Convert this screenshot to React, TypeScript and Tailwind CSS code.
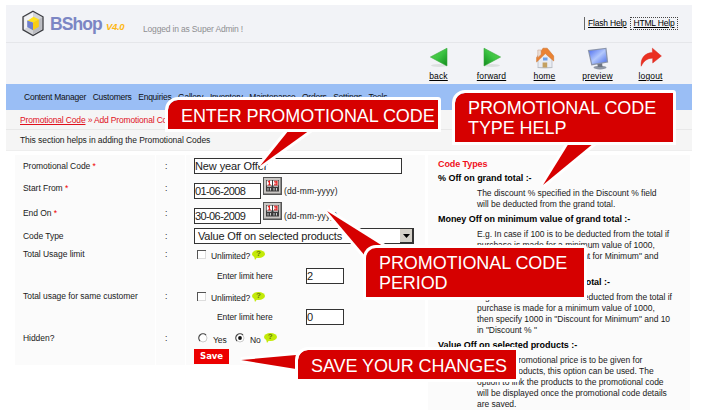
import type { ReactNode } from "react";

const menu = [
  "Content Manager",
  "Customers",
  "Enquiries",
  "Gallery",
  "Inventory",
  "Maintenance",
  "Orders",
  "Settings",
  "Tools",
];

function Logo() {
  return (
    <svg width="24" height="27" viewBox="0 0 24 27">
      <path d="M12 1.3 22 6.8v13L12 25.6 2 19.8v-13Z" fill="#d3d4d8" stroke="#3c3d42" strokeWidth="1.3" />
      <path d="M12 2.6 3.2 7.4v11.8L12 14Z" fill="#f3f3f5" />
      <path d="M12 24.2 20.8 19.2V7.6L12 14Z" fill="#b9bac0" />
      <path d="m12.500 6.800 5.300 2.400-5.300 3.200-6.300-1.400Z" fill="#ffe21c" />
      <path d="M6.2 10.500 12 12.600v7.600L6.2 17Z" fill="#6f7fcb" />
      <path d="M17.8 9.200 12 12.600v7.600l5.8-3.400Z" fill="#f9cd12" />
    </svg>
  );
}

function Arrow({ flip = false }: { flip?: boolean }) {
  return (
    <svg width="20" height="22" viewBox="0 0 20 22" className={flip ? "-scale-x-100" : ""}>
      <defs>
        <linearGradient id="green" x1="0" y1="0" x2="1" y2="1">
          <stop offset="0" stopColor="#63d04e" />
          <stop offset="0.5" stopColor="#3cc443" />
          <stop offset="1" stopColor="#118a1d" />
        </linearGradient>
      </defs>
      <ellipse cx="10" cy="18.500" rx="8" ry="1.5" fill="#dcdfe0" />
      <path d="M1.4 10 18 1.2v17.8Z" fill="url(#green)" stroke="#35a83a" strokeWidth="0.6" />
    </svg>
  );
}

function Home() {
  return (
    <svg width="20" height="22" viewBox="0 0 20 22">
      <ellipse cx="10" cy="20.5" rx="8" ry="1.2" fill="#d5d8dc" />
      <path d="M3 10 10 4.500l7 5.500v10.5H3Z" fill="#e9ecf2" stroke="#a7acb6" strokeWidth="0.6" />
      <path d="M8 1.200h4.200L18.700 9v5L10.300 6.600 1.600 15V10.500Z" fill="#ea8234" stroke="#c96a20" strokeWidth="0.5" />
      <path d="M2.800 3h3.200v4.500l-3.200 3Z" fill="#eadfd8" stroke="#c99a80" strokeWidth="0.5" />
      <path d="M8 10.500h4.500v3H8Z" fill="#6e9fe8" />
      <path d="M7.6 15.500h4.6v5H7.6Z" fill="#c3a061" />
    </svg>
  );
}

function Monitor() {
  return (
    <svg width="22" height="23" viewBox="0 0 22 23">
      <defs>
        <linearGradient id="screen" x1="0" y1="0" x2="1" y2="1">
          <stop offset="0" stopColor="#4d6df0" />
          <stop offset="0.5" stopColor="#b3c8fc" />
          <stop offset="1" stopColor="#4b6de8" />
        </linearGradient>
      </defs>
      <ellipse cx="13" cy="20.6" rx="6.5" ry="1.8" fill="#8e95a3" />
      <path d="m10 16 5-1 .5 5H11Z" fill="#6d7583" />
      <path d="M.8 3 19.5.8l1.7 14.6L4.3 18.6Z" fill="#8b95ab" />
      <path d="M2.2 4 18.4 2l1.4 12.4L5.2 17Z" fill="url(#screen)" />
    </svg>
  );
}

function Logout() {
  return (
    <svg width="22" height="22" viewBox="0 0 22 22">
      <path
        d="M1.2 19.2C.3 11 5.2 5.8 12.4 5.6V1.2L21.4 9l-8.7 7V11.2C7.6 11 3.8 13.8 1.2 19.2Z"
        fill="#ea3022"
        stroke="#d92a20"
        strokeWidth="0.5"
      />
    </svg>
  );
}

function Tool({ label, children }: { label: string; children: ReactNode }) {
  return (
    <div className="flex w-[53px] flex-col items-center">
      <div className="flex h-[23px] items-start">{children}</div>
      <a className="text-[8.5px] leading-[12px] tracking-[0.15px] text-black underline">{label}</a>
    </div>
  );
}

function Row({ label, required, h, pt, children }: { label?: string; required?: boolean; h: string; pt?: string; children: ReactNode }) {
  return (
    <div className={`flex gap-px ${h}`}>
      <div className={`w-[140px] bg-[#fbfbfb] pl-[8px] leading-[10px] tracking-[-0.05px] ${pt ?? ""}`}>
        {label}
        {required && <span className="text-[#f00000]"> *</span>}
      </div>
      <div className={`w-[29px] bg-[#fbfbfb] pl-[9px] leading-[10px] ${pt ?? ""}`}>{label && ":"}</div>
      <div className="flex w-[239px] bg-[#fbfbfb] pl-[8px]">{children}</div>
    </div>
  );
}

function Box({ className, children }: { className: string; children: ReactNode }) {
  return (
    <div className={`h-[16px] shrink-0 border border-[#333] bg-white text-[11px] leading-[15px] text-[#222] ${className}`}>
      {children}
    </div>
  );
}

function Calendar() {
  return (
    <svg width="19" height="18" viewBox="0 0 19 18" className="ml-[2px] shrink-0">
      <path d="M0 0h19v18H0Z" fill="#555" />
      <path d="M1 1h16.5v15.5H1Z" fill="#c9c6c3" />
      <path d="M3 3h13v11.5H3Z" fill="#3c3c3c" />
      <path d="M3.7 3.5h5.3v5H3.7ZM10 3.5h5.3v5H10Z" fill="#fff" />
      <path d="m5 5 1.4-1v4M4.8 8h3.2M11 4.2h3v1.7h-2.5M14 5.9v2h-3" fill="none" stroke="#e01818" strokeWidth="1.1" />
      <path d="M4 9.3h4.5M10.5 9.3H15M5 11v2.5M7.5 11v2.5M11 11v2.5M13.5 11v2.5" stroke="#ddd" strokeWidth="0.9" />
    </svg>
  );
}

function Hint() {
  return (
    <span className="relative flex h-[8px] w-[13px] items-center justify-center rounded-[50%] bg-[#c3ea08] text-[8px] leading-[8px] font-bold text-[#637c10]">
      ?
      <svg width="4" height="4" className="absolute -bottom-[2px] left-[2px]">
        <path d="M0 0h4L1 4Z" fill="#c3ea08" />
      </svg>
    </span>
  );
}

function Check() {
  return <span className="h-[9px] w-[9px] border-t border-l border-[#555] bg-white shadow-[inset_-1px_-1px_0_#ddd]" />;
}

function Radio({ on = false }: { on?: boolean }) {
  return (
    <svg width="10" height="10" viewBox="0 0 10 10">
      <circle cx="5" cy="5" r="4" fill="#fff" stroke="#ccc" />
      <path d="M2 8A4 4 0 0 1 8 2" fill="none" stroke="#444" strokeWidth="1.1" />
      {on && <circle cx="5" cy="5" r="1.9" fill="#111" />}
    </svg>
  );
}

function LimitRows({ label, value, h }: { label: string; value: string; h: string }) {
  return (
    <>
      <Row label={label} h={h} pt="pt-[3px]">
        <div className="flex h-[10px] pt-[4px] pl-[3px]">
          <Check />
          <span className="mt-px ml-[5px] w-[41px] leading-[10px]">Unlimited?</span>
          <Hint />
        </div>
      </Row>
      <Row h="h-[22px]">
        <span className="w-[112px] shrink-0 pt-[5px] pl-[23px] leading-[10px] whitespace-nowrap">Enter limit here</span>
        <Box className="mt-[2px] w-[38px]">{value}</Box>
      </Row>
    </>
  );
}

function HelpItem({ title, lines, className }: { title: string; lines: string[]; className: string }) {
  return (
    <div className={className}>
      <h3 className="mb-[4px] bg-[#fbfbfb] pl-[10px] text-[9px] leading-[11px] font-bold tracking-[-0.04px] text-black">{title}</h3>
      {lines.map((l) => (
        <p key={l} className="pl-[49px] leading-[11px] tracking-[-0.03px] whitespace-nowrap">
          {l}
        </p>
      ))}
    </div>
  );
}

function Callout({ className, children }: { className: string; children: ReactNode }) {
  return (
    <div
      className={`absolute rounded-tl-[13px] rounded-tr-[3px] border-[3px] border-white bg-[#d60000] bg-clip-padding pl-[13px] text-[18px] leading-[20px] tracking-[-0.08px] whitespace-nowrap text-white ${className}`}
    >
      {children}
    </div>
  );
}

export default function App() {
  return (
    <div className="relative h-[419px] w-[702px] overflow-hidden bg-white pt-[5px] pl-[6px] font-['Liberation_Sans',Arial,sans-serif] text-[8.5px] tracking-[-0.1px] text-[#1a1a1a]">
      <div className="w-[686px]">
        <header className="flex h-[38px] items-start border-b border-[#e5e6ea] bg-[#f2f3f7] pl-[15px]">
          <div className="mt-[5px]">
            <Logo />
          </div>
          <span className="mt-[9px] ml-[5px] w-[56px] text-[17.5px] leading-[20px] font-bold tracking-[-0.9px] text-[#7c86c4]">BShop</span>
          <span className="mt-[16px] w-[37px] text-[9.5px] leading-[12px] font-bold tracking-[-0.3px] text-[#fdb814] italic">V4.0</span>
          <span className="mt-[18px] tracking-[-0.17px] text-[#8e8e92]">Logged in as Super Admin !</span>
          <div className="mt-[12px] mr-[14px] ml-auto flex h-[13px] items-center border-l border-[#666] pl-[3px] leading-[11px] tracking-[-0.2px] text-black">
            <a className="w-[42px] underline">Flash Help</a>
            <a className="h-[13px] w-[48px] border border-dotted border-[#444] text-center underline">HTML Help</a>
          </div>
        </header>
        <div className="flex h-[41px] justify-end bg-[#f2f3f7] pt-[4px] pr-[15px]">
          <Tool label="back"><Arrow /></Tool>
          <Tool label="forward"><Arrow flip /></Tool>
          <Tool label="home"><Home /></Tool>
          <Tool label="preview"><Monitor /></Tool>
          <Tool label="logout"><Logout /></Tool>
        </div>
        <nav className="flex h-[26px] items-center gap-[6.6px] bg-[#9abef5] pl-[18px] tracking-[-0.24px] text-[#111]">
          {menu.map((m) => (
            <a key={m}>{m}</a>
          ))}
        </nav>
        <div className="h-[20px] border-b border-[#e8e8e8] bg-[#f5f5f5] pl-[14px] leading-[21px] tracking-[-0.16px] text-[#e0101c]">
          <a className="underline">Promotional Code</a> » Add Promotional Code
        </div>
        <div className="h-[21px] border-b border-[#eee] bg-[#f5f5f5] pl-[14px] leading-[21px] tracking-[-0.07px]">
          This section helps in adding the Promotional Codes
        </div>
        <main className="flex pt-[4px] pl-[9px]">
          <section className="w-[413px]">
            <Row label="Promotional Code" required h="h-[22px]" pt="pt-[6px]">
              <Box className="mt-[3px] w-[208px]">New year Offer</Box>
            </Row>
            <Row label="Start From" required h="h-[25px]" pt="pt-[6px]">
              <Box className="mt-[6px] w-[67px] tracking-[-0.6px]">01-06-2008</Box>
              <Calendar />
              <span className="mt-[9px] ml-[2px] leading-[10px] tracking-[0.15px]">(dd-mm-yyyy)</span>
            </Row>
            <Row label="End On" required h="h-[25px]" pt="pt-[6px]">
              <Box className="mt-[6px] w-[67px] tracking-[-0.6px]">30-06-2009</Box>
              <Calendar />
              <span className="mt-[9px] ml-[2px] leading-[10px] tracking-[0.15px]">(dd-mm-yyyy)</span>
            </Row>
            <Row label="Code Type" h="h-[19px]" pt="pt-[4px]">
              <Box className="mt-px flex w-[220px] justify-between pl-[3px] tracking-[-0.18px]">
                <span>Value Off on selected products</span>
                <span className="flex h-[14px] w-[13px] items-center justify-center border-r border-b border-[#333] bg-[#d4d0c8]">
                  <svg width="7" height="4"><path d="M0 0h7L3.500 4Z" fill="#000" /></svg>
                </span>
              </Box>
            </Row>
            <LimitRows label="Total Usage limit" value="2" h="h-[20px]" />
            <LimitRows label="Total usage for same customer" value="0" h="h-[19px]" />
            <Row label="Hidden?" h="h-[20px]" pt="pt-[4px]">
              <div className="flex h-[10px] pt-[4px] pl-[4px]">
                <Radio />
                <span className="mt-[2px] ml-[5px] w-[22px] leading-[10px]">Yes</span>
                <Radio on />
                <span className="mt-[2px] mr-[3px] ml-[5px] leading-[10px]">No</span>
                <Hint />
              </div>
            </Row>
            <Row h="h-[16px]">
              <button className="h-[15px] w-[35px] bg-[#ec0000] font-['DejaVu_Sans',Verdana,sans-serif] text-[8.5px] leading-[15px] font-bold text-white">
                Save
              </button>
            </Row>
          </section>
          <aside className="h-[255px] w-[262px] bg-[#fbfbfb] pt-[4px] text-[8.5px]">
            <h2 className="pl-[10px] text-[9px] leading-[11px] font-bold text-[#f0101c]">Code Types</h2>
            <HelpItem
              className="mt-[3px]"
              title="% Off on grand total :-"
              lines={["The discount % specified in the Discount % field", "will be deducted from the grand total."]}
            />
            <HelpItem
              className="mt-[4px]"
              title="Money Off on minimum value of grand total :-"
              lines={[
                "E.g. In case if 100 is to be deducted from the total if",
                "purchase is made for a minimum value of 1000,",
                "then specify 1000 in \"Discount for Minimum\" and",
                "100 in \"Discount\"",
              ]}
            />
            <HelpItem
              className="mt-[4px]"
              title="% Off on minimum value of grand total :-"
              lines={[
                "E.g. In case if 10% is to be deducted from the total if",
                "purchase is made for a minimum value of 1000,",
                "then specify 1000 in \"Discount for Minimum\" and 10",
                "in \"Discount % \"",
              ]}
            />
            <HelpItem
              className="mt-[4px]"
              title="Value Off on selected products :-"
              lines={[
                "In case a promotional price is to be given for",
                "selected products, this option can be used. The",
                "option to link the products to the promotional code",
                "will be displayed once the promotional code details",
                "are saved.",
              ]}
            />
          </aside>
        </main>
      </div>

      <svg width="702" height="419" className="absolute top-0 left-0">
        <g fill="#fff" stroke="#fff" strokeWidth="6">
          <path d="M289 130H310L260 166Z" />
          <path d="M569 143H594L543 185Z" />
          <path d="M327 211 386 248 366 257Z" />
          <path d="M241 360 296 355V369Z" />
        </g>
        <g fill="#d60000">
          <path d="M289 130H310L260 166Z" />
          <path d="M569 143H594L543 185Z" />
          <path d="M327 211 386 248 366 257Z" />
          <path d="M241 360 296 355V369Z" />
        </g>
      </svg>
      <Callout className="top-[97px] left-[165px] h-[35px] w-[276px] pt-[6px]">ENTER PROMOTIONAL CODE</Callout>
      <Callout className="top-[90px] left-[452px] h-[55px] w-[224px] pt-[5px]">
        PROMOTIONAL CODE
        <br />
        TYPE HELP
      </Callout>
      <Callout className="top-[245px] left-[363px] h-[55px] w-[224px] pt-[5px]">
        PROMOTIONAL CODE
        <br />
        PERIOD
      </Callout>
      <Callout className="top-[347px] left-[295px] h-[35px] w-[224px] pt-[6px]">SAVE YOUR CHANGES</Callout>
    </div>
  );
}
